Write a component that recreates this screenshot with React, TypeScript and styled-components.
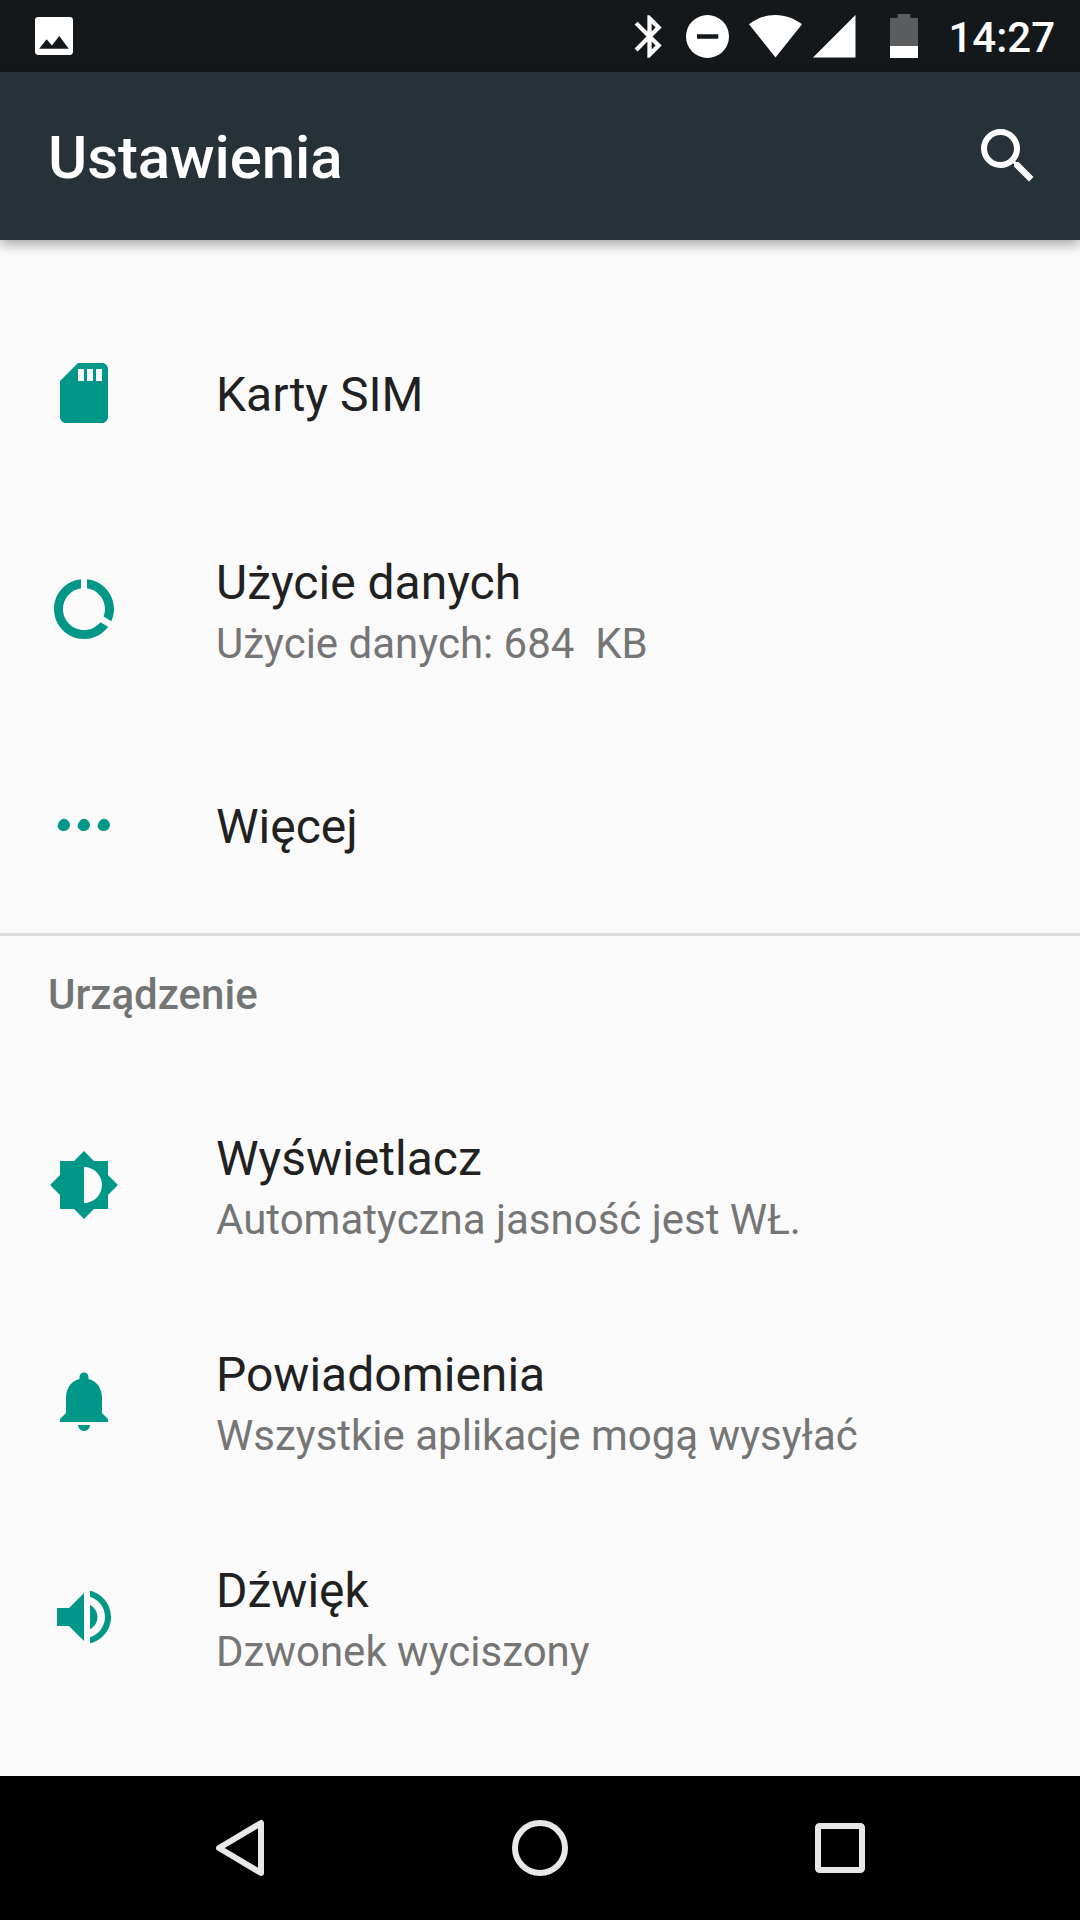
import React from "react";
import styled, { createGlobalStyle } from "styled-components";

const Global = createGlobalStyle`
  * { box-sizing: border-box; }
  html, body { margin: 0; padding: 0; background: #fafafa; }
  body { font-family: Roboto, "Liberation Sans", sans-serif; }
`;

const Screen = styled.div`
  width: 1080px;
  height: 1920px;
  display: flex;
  flex-direction: column;
  overflow: hidden;
  background: #fafafa;
`;

const StatusBar = styled.header`
  flex: none;
  height: 72px;
  display: flex;
  align-items: center;
  justify-content: space-between;
  padding: 0 25px 0 35px;
  background: #14181b;
  color: #fff;
`;

const StatusIcons = styled.div`
  display: flex;
  align-items: center;
`;

const Glyph = styled.svg<{ $w: number; $h?: number; $gap?: number }>`
  display: block;
  flex: none;
  width: ${(p) => p.$w}px;
  height: ${(p) => p.$h ?? p.$w}px;
  margin-left: ${(p) => p.$gap ?? 0}px;
  fill: currentColor;
`;

const Clock = styled.time`
  width: 107px;
  margin-left: 30px;
  padding-top: 4px;
  font-size: 42px;
  font-weight: 500;
  line-height: 48px;
  text-align: right;
`;

const AppBar = styled.div`
  flex: none;
  height: 168px;
  display: flex;
  align-items: center;
  justify-content: space-between;
  padding: 0 36px 0 48px;
  background: #263238;
  color: #fff;
  box-shadow: 0 4px 12px rgba(0, 0, 0, 0.36);
  z-index: 1;
`;

const PageTitle = styled.h1`
  margin: 0;
  padding-top: 4px;
  font-size: 60px;
  font-weight: 500;
  letter-spacing: -0.1px;
  line-height: 72px;
`;

const Content = styled.main`
  flex: 1;
  min-height: 0;
  overflow: hidden;
  padding-top: 45px;
`;

const Section = styled.section<{ $divided?: boolean }>`
  border-top: ${(p) => (p.$divided ? "3px solid #dcdcdc" : "none")};
`;

const SectionTitle = styled.h2`
  margin: 0;
  height: 141px;
  padding: 34px 48px 0;
  color: #737574;
  font-size: 42px;
  font-weight: 500;
  line-height: 50px;
`;

const Row = styled.div`
  height: 216px;
  display: flex;
  align-items: center;
  padding: 0 48px;
  color: #009688;
`;

const RowText = styled.div<{ $twoLine: boolean }>`
  margin-left: 96px;
  padding-top: ${(p) => (p.$twoLine ? 6 : 4)}px;
  white-space: pre;
`;

const RowTitle = styled.div`
  color: #212121;
  font-size: 48px;
  line-height: 64px;
`;

const Summary = styled.div`
  color: #757575;
  font-size: 42px;
  line-height: 58px;
`;

const NavBar = styled.nav`
  flex: none;
  height: 144px;
  display: flex;
  align-items: center;
  justify-content: center;
  gap: 228px;
  background: #000;
  color: #e8e8e8;
`;

const icons = {
  sim: "M18 2h-8L4 8v12c0 1.1.9 2 2 2h12c1.1 0 2-.9 2-2V4c0-1.1-.9-2-2-2zm-6 6h-2V4h2v4zm3 0h-2V4h2v4zm3 0h-2V4h2v4z",
  data: "M13 2.05v3.03c3.39.49 6 3.39 6 6.92 0 .9-.18 1.75-.48 2.54l2.6 1.53c.56-1.24.88-2.62.88-4.07 0-5.18-3.95-9.45-9-9.95zM12 19c-3.87 0-7-3.13-7-7 0-3.53 2.61-6.43 6-6.92V2.05c-5.06.5-9 4.76-9 9.95 0 5.52 4.47 10 9.99 10 3.31 0 6.24-1.61 8.06-4.09l-2.6-1.53C16.17 17.98 14.21 19 12 19z",
  more: [0, 6.67, 13.33]
    .map((x) => `M${3.22 + x} 12.4C${3.2 + x} 11.6 ${4.1 + x} 9.95 ${5.3 + x} 9.95a2.03 2.03 0 0 1 0 4.06C${4.2 + x} 14.01 ${3.25 + x} 13.2 ${3.22 + x} 12.4z`)
    .join(""),
  display: "M20 15.31L23.31 12 20 8.69V4h-4.69L12 .69 8.69 4H4v4.69L.69 12 4 15.31V20h4.69L12 23.31 15.31 20H20v-4.69zM12 18V6c3.31 0 6 2.69 6 6s-2.69 6-6 6z",
  bell: "M12 22c1.1 0 2-.9 2-2h-4a2 2 0 0 0 2 2zm6-6v-5c0-3.07-1.64-5.64-4.5-6.32V4c0-.83-.67-1.5-1.5-1.5s-1.5.67-1.5 1.5v.68C7.63 5.36 6 7.92 6 11v5l-2 2v1h16v-1l-2-2z",
  sound: "M3 9v6h4l5 5V4L7 9H3zm13.5 3c0-1.77-1.02-3.29-2.5-4.03v8.05c1.48-.73 2.5-2.25 2.5-4.02zM14 3.23v2.06c2.89.86 5 3.54 5 6.71s-2.11 5.85-5 6.71v2.06c4.01-.91 7-4.49 7-8.77s-2.99-7.86-7-8.77z",
  search: "M15.5 14h-.79l-.28-.27A6.47 6.47 0 0 0 16 9.5 6.5 6.5 0 1 0 9.5 16c1.61 0 3.09-.59 4.23-1.57l.27.28v.79l5 4.99L20.49 19l-4.99-5zm-6 0C7.01 14 5 11.99 5 9.5S7.01 5 9.5 5 14 7.01 14 9.5 11.99 14 9.5 14z",
  image: "M21 19.5v-15c0-.9-.6-1.5-1.5-1.5h-15C3.6 3 3 3.6 3 4.5v15c0 .9.6 1.5 1.5 1.5h15c.9 0 1.5-.6 1.5-1.5zM8.5 13.5l2.5 3.01L14.5 12l4.5 6H5l3.5-4.5z",
  bluetooth: "M17.71 7.71L12 2h-1v7.59L6.41 5 5 6.41 10.59 12 5 17.59 6.41 19 11 14.41V22h1l5.71-5.71-4.3-4.29 4.3-4.29zM13 5.83l1.88 1.88L13 9.59V5.83zm1.88 10.46L13 18.17v-3.76l1.88 1.88z",
};

type IconName = keyof typeof icons;

const Icon = ({ name, size = 72, gap }: { name: IconName; size?: number; gap?: number }) => (
  <Glyph viewBox="0 0 24 24" $w={size} $gap={gap}>
    <path d={icons[name]} />
  </Glyph>
);

const Item = ({ icon, title, summary }: { icon: IconName; title: string; summary?: string }) => (
  <Row>
    <Icon name={icon} />
    <RowText $twoLine={Boolean(summary)}>
      <RowTitle>{title}</RowTitle>
      {summary && <Summary>{summary}</Summary>}
    </RowText>
  </Row>
);

export default function App() {
  return (
    <Screen>
      <Global />
      <StatusBar>
        <Glyph viewBox="3 3 18 18" $w={38}>
          <path d={icons.image} />
        </Glyph>
        <StatusIcons>
          <Icon name="bluetooth" size={51} />
          <Glyph viewBox="0 0 43 43" $w={43} $gap={11.5}>
            <path fillRule="evenodd" d="M21.5 0a21.5 21.5 0 1 0 0 43a21.5 21.5 0 1 0 0-43zM11 19.3h21.3v4.4H11z" />
          </Glyph>
          <Glyph viewBox="0 0 53 43" $w={53} $h={43} $gap={20}>
            <path d="M26.5 42.5L0 9.3C7.5 3.5 16.5 0 26.5 0S45.5 3.5 53 9.3z" />
          </Glyph>
          <Glyph viewBox="0 0 43 43" $w={43} $gap={11}>
            <path d="M0 42.5L42.5 0V42.5z" />
          </Glyph>
          <Glyph viewBox="0 0 28 44" $w={28} $h={44} $gap={34}>
            <path fill="#5b5c5e" d="M0 4h7.5V0h13v4H28v40H0z" />
            <path d="M0 32h28v12H0z" />
          </Glyph>
          <Clock>14:27</Clock>
        </StatusIcons>
      </StatusBar>
      <AppBar>
        <PageTitle>Ustawienia</PageTitle>
        <Icon name="search" />
      </AppBar>
      <Content>
        <Section>
          <Item icon="sim" title="Karty SIM" />
          <Item icon="data" title="Użycie danych" summary={"Użycie danych: 684  KB"} />
          <Item icon="more" title="Więcej" />
        </Section>
        <Section $divided>
          <SectionTitle>Urządzenie</SectionTitle>
          <Item icon="display" title="Wyświetlacz" summary="Automatyczna jasność jest WŁ." />
          <Item icon="bell" title="Powiadomienia" summary="Wszystkie aplikacje mogą wysyłać" />
          <Item icon="sound" title="Dźwięk" summary="Dzwonek wyciszony" />
        </Section>
      </Content>
      <NavBar>
        <Glyph viewBox="0 0 72 72" $w={72}>
          <path d="M57 11V61L15 36z" fill="none" stroke="currentColor" strokeWidth="6" strokeLinejoin="round" />
        </Glyph>
        <Glyph viewBox="0 0 72 72" $w={72}>
          <circle cx="36" cy="36" r="25" fill="none" stroke="currentColor" strokeWidth="6" />
        </Glyph>
        <Glyph viewBox="0 0 72 72" $w={72}>
          <rect x="14" y="14" width="44" height="44" rx="1.5" fill="none" stroke="currentColor" strokeWidth="6" />
        </Glyph>
      </NavBar>
    </Screen>
  );
}
